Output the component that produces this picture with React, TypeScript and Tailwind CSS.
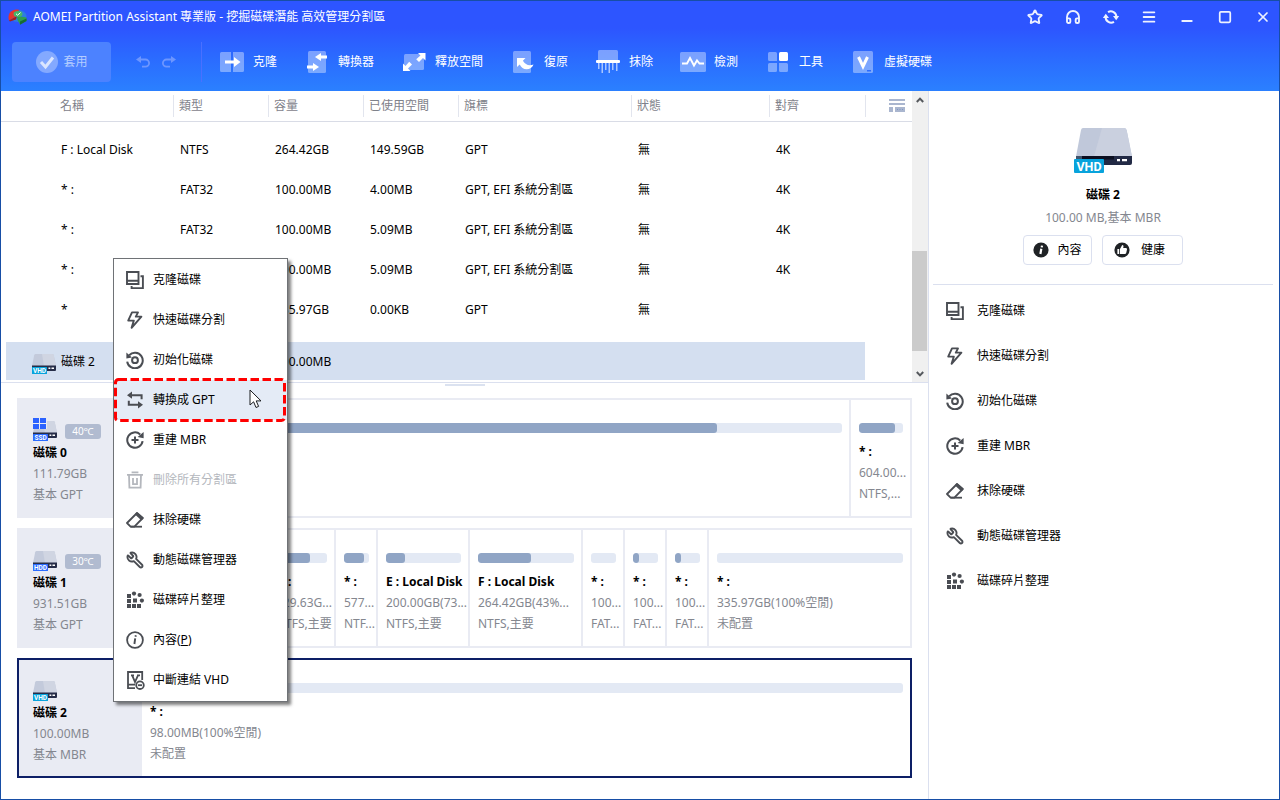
import type { ReactNode } from "react";
import { Menu, Minus, Square, Star, X, Wrench, Headphones } from "lucide-react";

/* ---------- action icons ---------- */

const CloneIcon = () => (
  <svg viewBox="0 0 18 18" className="size-[18px] shrink-0" fill="none" stroke="currentColor" strokeWidth="1.9">
    <path d="M1 1h11.500v12H1zM1 9.800h11.500M14.500 5.200h2.400v11.900H5.600v-2.200" />
  </svg>
);
const BoltIcon = () => (
  <svg viewBox="0 0 18 18" className="size-[18px] shrink-0" fill="none" stroke="currentColor" strokeWidth="1.9" strokeLinejoin="round">
    <path d="M6 1.400h6L9.800 5.600h5.600L5.600 16.800l2.200-7.200H2.200z" />
  </svg>
);
const InitIcon = () => (
  <svg viewBox="0 0 18 18" className="size-[18px] shrink-0" fill="none" stroke="currentColor" strokeWidth="2">
    <path d="M3.200 4.200A7.800 7.800 0 1 1 1.200 10.600" />
    <circle cx="9" cy="9.200" r="2.900" />
    <path d="M.4 1.400v6l5.600-.8z" fill="currentColor" stroke="none" />
  </svg>
);
const ConvertIcon = () => (
  <svg viewBox="0 0 18 18" className="size-[18px] shrink-0" fill="none" stroke="currentColor" strokeWidth="2">
    <path d="M4 4.200h11.600v4M14 13.800H2.800v-4" />
    <path d="M1 4.200l5-3.600v7.200zM17 13.800l-5-3.600v7.200z" fill="currentColor" stroke="none" />
  </svg>
);
const RebuildIcon = () => (
  <svg viewBox="0 0 18 18" className="size-[18px] shrink-0" fill="none" stroke="currentColor" strokeWidth="2">
    <path d="M14.200 3.400A7.700 7.700 0 1 0 16.600 10.200M9 5.600v7M5.500 9.100h7" />
    <path d="M17.600 1v6.200l-6-1.200z" fill="currentColor" stroke="none" />
  </svg>
);
const TrashIcon = () => (
  <svg viewBox="0 0 18 18" className="size-[18px] shrink-0" fill="none" stroke="currentColor" strokeWidth="1.800">
    <path d="M1 3.800h16M5.600 1.400h6.800M3 3.800l.4 12.800h11.200L15 3.800M7 7v6.200h4V7" />
  </svg>
);
const EraserIcon = () => (
  <svg viewBox="0 0 18 18" className="size-[18px] shrink-0" fill="none" stroke="currentColor" strokeWidth="1.800" strokeLinejoin="round">
    <path d="M11 2l5.800 5-8.400 8.600H4.600L1 12z" />
    <path d="M11 2l5.800 5-1.400 1.400L9.800 3.200z" fill="currentColor" strokeWidth="1.400" />
    <path d="M4.600 15.700H16" />
  </svg>
);
const WrenchIcon = () => <Wrench className="size-[18px] shrink-0 -scale-x-100" strokeWidth={2.500} />;
const DefragIcon = () => (
  <svg viewBox="0 0 18 18" className="size-[18px] shrink-0" fill="currentColor">
    <path d="M1 3h4v4H1zM1 8h4v4H1zM7 7.500h4v4H7zM1 13h4v4H1zM6 13h4v4H6zM11 13h4v4h-4z" />
    <circle cx="8" cy="2.600" r="2.100" />
    <circle cx="13.600" cy="4" r="2.100" />
    <circle cx="15.900" cy="9.600" r="2.100" />
  </svg>
);
const InfoIcon = () => (
  <svg viewBox="0 0 18 18" className="size-[18px] shrink-0" fill="none" stroke="currentColor" strokeWidth="1.800">
    <circle cx="9" cy="9" r="7.900" />
    <path d="M9.200 7.400L8.400 13M9.800 4.200l-.3 1.600" strokeWidth="1.900" />
  </svg>
);
const DetachIcon = () => (
  <svg viewBox="0 0 19 19" className="size-[19px] shrink-0" fill="none" stroke="currentColor" strokeWidth="1.800">
    <path d="M16.200 9V1H2v16.200h7M2 13.600h7M5 4.400h3M6.200 4.400L9 11l3-6.600M11 4.400h3" />
    <circle cx="14" cy="14.200" r="3.800" />
    <path d="M12 14.200h4" />
  </svg>
);

type Action = { label: string; icon: ReactNode };
const actions: Action[] = [
  { label: "克隆磁碟", icon: <CloneIcon /> },
  { label: "快速磁碟分割", icon: <BoltIcon /> },
  { label: "初始化磁碟", icon: <InitIcon /> },
  { label: "重建 MBR", icon: <RebuildIcon /> },
  { label: "抹除硬碟", icon: <EraserIcon /> },
  { label: "動態磁碟管理器", icon: <WrenchIcon /> },
  { label: "磁碟碎片整理", icon: <DefragIcon /> },
];

type MenuEntry = { label: ReactNode; icon: ReactNode; state?: "active" | "disabled" };
const menuEntries: MenuEntry[] = [
  actions[0],
  actions[1],
  actions[2],
  { label: "轉換成 GPT", icon: <ConvertIcon />, state: "active" },
  actions[3],
  { label: "刪除所有分割區", icon: <TrashIcon />, state: "disabled" },
  actions[4],
  actions[5],
  actions[6],
  { label: <>內容(<u>P</u>)</>, icon: <InfoIcon /> },
  { label: "中斷連結 VHD", icon: <DetachIcon /> },
];

/* ---------- toolbar ---------- */

const tools: Action[] = [
  {
    label: "克隆",
    icon: (
      <svg viewBox="0 0 26 24" className="h-6 w-[26px]" fill="#fff">
        <path d="M1 3.500q0-1.500 1.500-1.500H12v20H2.500q-1.500 0-1.500-1.500zM14 2h9.500q1.500 0 1.500 1.500v17q0 1.500-1.500 1.500H14z" opacity=".38" />
        <path d="M6 10.400h9V7l6.500 5-6.500 5v-3.400H6z" />
      </svg>
    ),
  },
  {
    label: "轉換器",
    icon: (
      <svg viewBox="0 0 26 24" className="h-6 w-[26px]" fill="#fff">
        <rect x="4" y="1" width="18" height="22" rx="1.500" opacity=".38" />
        <path d="M23 5.500h-6V3l-6 4 6 4V8.500h6zM3 15.500h6V13l6 4-6 4v-2.500H3z" />
      </svg>
    ),
  },
  {
    label: "釋放空間",
    icon: (
      <svg viewBox="0 0 26 24" className="h-6 w-[26px]" fill="#fff">
        <rect x="3" y="4" width="20" height="16" rx="1.500" opacity=".38" />
        <path d="M17 3h7.500v7.500L22 8l-4 4-2.800-2.800L19.500 5.500zM2 13.500V21h7.500L7 18.500l4-4-2.800-2.800L4.500 16z" />
      </svg>
    ),
  },
  {
    label: "復原",
    icon: (
      <svg viewBox="0 0 26 24" className="h-6 w-[26px]" fill="#fff">
        <rect x="3" y="1" width="18" height="22" rx="1.500" opacity=".38" />
        <path d="M7 8h8.500l-2.600 2.800c2.600 4 6 5.400 10.600 3.700-1 3-3.800 4.800-6.800 4.800-3.400 0-5.400-1.800-7-4.800L7 17z" />
      </svg>
    ),
  },
  {
    label: "抹除",
    icon: (
      <svg viewBox="0 0 26 24" className="h-6 w-[26px]" fill="#fff">
        <path d="M3 1.500Q3 0 4.500 0h17Q23 0 23 1.500V10H3z" opacity=".38" />
        <rect x="1" y="10" width="24" height="3" rx="1" />
        <path d="M3 13h1.500v6H3zM6.500 13H8v10H6.500zM10 13h1.500v7H10zM13.500 13H15v10h-1.500zM17 13h1.500v7H17zM21 13h1.500v8H21z" opacity=".6" />
      </svg>
    ),
  },
  {
    label: "檢測",
    icon: (
      <svg viewBox="0 0 26 24" className="h-6 w-[26px]" fill="none">
        <rect y="2" width="26" height="20" rx="1.500" fill="#fff" opacity=".38" />
        <path d="M2 13.500h5L10 8l4 7.500 3-5 2.500 3H24" stroke="#fff" strokeWidth="1.900" />
      </svg>
    ),
  },
  {
    label: "工具",
    icon: (
      <svg viewBox="0 0 26 24" className="h-6 w-[26px]" fill="#fff">
        <path d="M4.500 2h6q1.500 0 1.500 1.500V11H4.500Q3 11 3 9.500v-6Q3 2 4.500 2zM4.500 13H12v7.500q0 1.500-1.500 1.500h-6Q3 22 3 20.500v-6Q3 13 4.500 13zM14 13h7.500q1.500 0 1.500 1.500v6q0 1.500-1.500 1.500h-6q-1.500 0-1.500-1.500z" opacity=".38" />
        <rect x="14" y="2" width="9" height="9" rx="1.500" />
      </svg>
    ),
  },
  {
    label: "虛擬硬碟",
    icon: (
      <svg viewBox="0 0 26 24" className="h-6 w-[26px]">
        <rect x="3" y="1" width="20" height="22" rx="1.500" fill="#fff" opacity=".38" />
        <path d="M8.500 7l4.500 9.500L17.500 7" fill="none" stroke="#fff" strokeWidth="3" />
        <rect x="17" y="20" width="4" height="1.500" fill="#2b6cff" />
      </svg>
    ),
  },
];

const Logo = () => (
  <svg viewBox="0 0 19 16" className="h-4 w-[19px]">
    <ellipse cx="10" cy="7" rx="8.500" ry="6" fill="#2d7de0" />
    <path d="M9 7L1 11.500Q-1 4 5 1.200 8 0 11 .8z" fill="#e5352f" />
    <path d="M1 11.500L9 7l-1 3.500-6 2z" fill="#a81e1e" />
    <path d="M9 7l9.500 1.500V12L12 15.500 9.500 11z" fill="#2f9e4f" />
    <path d="M12 12.500l6.500-3V12L12 15.800z" fill="#176b34" />
    <ellipse cx="10" cy="5" rx="4.500" ry="3" fill="#45b56a" />
    <path d="M8 4.800l1.600 1.400L12.500 3.600" fill="none" stroke="#fff" strokeWidth="1" />
  </svg>
);

const RefreshIcon = () => (
  <svg viewBox="0 0 16 16" className="size-4" fill="none" stroke="currentColor" strokeWidth="2">
    <path d="M5 3.200A5.500 5.500 0 0 1 13.400 8M11 12.800A5.500 5.500 0 0 1 2.600 8" />
    <path d="M10 7H16.200L13.200 11.200zM-.2 9h6.200L2.800 4.800z" fill="currentColor" stroke="none" />
  </svg>
);

const windowButtons: Action[] = [
  { label: "收藏", icon: <Star className="size-4" strokeWidth={2.800} /> },
  { label: "支援", icon: <Headphones className="size-4" strokeWidth={2.800} /> },
  { label: "重新整理", icon: <RefreshIcon /> },
  { label: "選單", icon: <Menu className="size-4" strokeWidth={2.800} /> },
  { label: "最小化", icon: <Minus className="size-4 translate-y-1" strokeWidth={3} /> },
  { label: "最大化", icon: <Square className="size-[14px]" strokeWidth={3} /> },
  { label: "關閉", icon: <X className="size-4" strokeWidth={2.600} /> },
];

function Header() {
  return (
    <header className="bg-linear-to-b from-[#2d55ff] from-30% to-[#2b80ff] text-white">
      <div className="flex h-[31px] items-center justify-between pr-2 pl-[7px]">
        <div className="flex items-center gap-[6px]">
          <Logo />
          <h1 className="whitespace-nowrap">AOMEI Partition Assistant 專業版 - 挖掘磁碟潛能 高效管理分割區</h1>
        </div>
        <div className="flex items-center gap-[22px]">
          {windowButtons.map((b) => (
            <button key={b.label} aria-label={b.label} className="flex size-4 items-center justify-center text-[#eef2ff]">
              {b.icon}
            </button>
          ))}
        </div>
      </div>
      <div className="flex h-[59px] items-center pt-px pl-[11px]">
        <button className="flex h-10 w-[99px] items-center justify-center gap-1 rounded-[4px] bg-[#4c82ff] text-[#b5cdff]">
          <svg viewBox="0 0 24 24" className="size-6">
            <circle cx="12" cy="12" r="11" fill="#84a9ff" />
            <path d="M6 12l4.500 5L18 7.500" fill="none" stroke="#dbe6ff" strokeWidth="3" />
          </svg>
          套用
        </button>
        <div className="ml-[25px] flex w-[65px] gap-3 text-[#6d96ff]">
          <button aria-label="復原上一步">
            <svg viewBox="0 0 14 12" className="h-3 w-[14px]" fill="none" stroke="currentColor" strokeWidth="1.800">
              <path d="M3 3.500h6.500a3.600 3.600 0 0 1 0 7.200H6" />
              <path d="M0 3.500L5 0v7z" fill="currentColor" stroke="none" />
            </svg>
          </button>
          <button aria-label="重做">
            <svg viewBox="0 0 14 12" className="h-3 w-[14px] -scale-x-100" fill="none" stroke="currentColor" strokeWidth="1.800">
              <path d="M3 3.500h6.500a3.600 3.600 0 0 1 0 7.200H6" />
              <path d="M0 3.500L5 0v7z" fill="currentColor" stroke="none" />
            </svg>
          </button>
        </div>
        <div className="flex h-10 items-center gap-[27px] border-l border-[#4a70ff] pl-[17px]">
          {tools.map((t) => (
            <button key={t.label} className="flex items-center gap-2 whitespace-nowrap">
              {t.icon}
              {t.label}
            </button>
          ))}
        </div>
      </div>
    </header>
  );
}

/* ---------- drives ---------- */

type DriveKind = "VHD" | "HDD" | "SSD";

function DriveIcon({ kind, windows }: { kind: DriveKind; windows?: boolean }) {
  return (
    <svg viewBox="0 0 24 24" className="size-6 shrink-0">
      <path d="M3.500 4h16.800q1.200 0 1.500 1.200L24 16H0L2.200 5.200Q2.500 4 3.500 4z" fill="#c3cadb" />
      <path d="M10 4h10.300q1.200 0 1.500 1.200L24 16H12z" fill="#d0d5e2" />
      <path d="M0 15.500h24v4.500q0 1-1 1H0z" fill="#262d48" />
      <path d="M16.500 17.600h1.800v1.400h-1.800zM19.500 17.600h2.500v1.400h-2.500z" fill="#fff" />
      {windows && (
        <>
          <path d="M0 0h14v12H0z" fill="#e9ebf3" />
          <path d="M0 1h6v5H0zM7 1h6v5H7zM0 7h6v5H0zM7 7h6v5H7z" fill="#2b62ff" />
        </>
      )}
      <rect y="17" width="15" height="7" rx=".5" fill={kind === "VHD" ? "#08a3dc" : "#2b6cff"} />
      <text x="7.500" y="23" textAnchor="middle" fontSize="6.500" fontWeight="700" fill="#fff" fontFamily="Roboto, sans-serif">
        {kind}
      </text>
    </svg>
  );
}

const LargeDriveIcon = () => (
  <svg viewBox="0 0 58 46" className="h-[46px] w-[58px]">
    <path d="M9 0h41q2 0 2.600 2L58 28.500H2L7 2q.5-2 2-2z" fill="#c0c8da" />
    <path d="M28 0h22q2 0 2.600 2L58 28.500H20z" fill="#cad0df" />
    <path d="M2 28h56v7q0 2-2 2H2z" fill="#222a45" />
    <path d="M2 28h6v3H2z" fill="#40536b" />
    <path d="M8 28h32v3.500H8z" fill="#0b0e20" />
    <path d="M43 31h3v2.200h-3zM48 31h5v2.200h-5z" fill="#fff" />
    <rect y="31" width="30" height="14" rx="1" fill="#08a3dc" />
    <text x="15" y="42.500" textAnchor="middle" fontSize="12.500" fontWeight="700" fill="#fff" fontFamily="Roboto, sans-serif">
      VHD
    </text>
  </svg>
);

/* ---------- partition table ---------- */

const columns = ["名稱", "類型", "容量", "已使用空間", "旗標", "狀態", "對齊"];
const rows = [
  ["F : Local Disk", "NTFS", "264.42GB", "149.59GB", "GPT", "無", "4K"],
  ["* :", "FAT32", "100.00MB", "4.00MB", "GPT, EFI 系統分割區", "無", "4K"],
  ["* :", "FAT32", "100.00MB", "5.09MB", "GPT, EFI 系統分割區", "無", "4K"],
  ["* :", "FAT32", "100.00MB", "5.09MB", "GPT, EFI 系統分割區", "無", "4K"],
  ["*", "", "335.97GB", "0.00KB", "GPT", "無", ""],
];

function PartitionTable() {
  return (
    <section className="flex h-[291px] overflow-hidden">
      <div className="min-w-0 flex-1">
        <table className="w-full table-fixed text-left">
          <colgroup>
            <col className="w-[172px]" />
            <col className="w-[95px]" />
            <col className="w-[95px]" />
            <col className="w-[95px]" />
            <col className="w-[173px]" />
            <col className="w-[138px]" />
            <col className="w-[96px]" />
            <col />
          </colgroup>
          <thead>
            <tr className="h-[30px] border-b border-[#d9dce6] text-[#7f828b]">
              {columns.map((c, i) => (
                <th key={c} className="p-0 font-normal">
                  <div className={i === 0 ? "pl-[59px]" : "flex h-[22px] items-center border-l border-[#e2e5ee] pl-[5px]"}>{c}</div>
                </th>
              ))}
              <th className="p-0">
                <div className="flex h-[22px] items-center justify-end border-l border-[#e2e5ee] pr-[7px]">
                  <button aria-label="欄位設定">
                    <svg viewBox="0 0 16 13" className="h-[13px] w-4" fill="#aab6cf">
                      <path d="M0 0h16v2H0zM0 4h16v2H0zM0 8h4v5H0zM6 8h10v5H6z" />
                      <path d="M8 10h1v1H8zM10.500 10h1v1h-1zM13 10h1v1h-1z" fill="#7f97c4" />
                    </svg>
                  </button>
                </div>
              </th>
            </tr>
          </thead>
          <tbody>
            <tr className="h-[9px]">
              <td colSpan={8} />
            </tr>
            {rows.map((r, i) => (
              <tr key={i} className="h-10">
                {r.map((v, j) => (
                  <td key={j} className={j === 0 ? "p-0 pl-[60px]" : "p-0 pl-[7px] whitespace-nowrap"}>
                    {v}
                  </td>
                ))}
                <td />
              </tr>
            ))}
            <tr className="h-3">
              <td colSpan={8} />
            </tr>
            <tr>
              <td className="p-0 pl-[5px]">
                <div className="flex h-[38px] items-center gap-[5px] bg-[#d4dff0] pt-px pl-[26px]">
                  <DriveIcon kind="VHD" />
                  磁碟 2
                </div>
              </td>
              <td className="bg-[#d4dff0]" />
              <td className="bg-[#d4dff0] p-0 pt-px pl-[7px]">100.00MB</td>
              <td colSpan={4} className="bg-[#d4dff0]" />
              <td />
            </tr>
          </tbody>
        </table>
      </div>
      <div className="flex w-4 shrink-0 flex-col items-center justify-between bg-[#f0f0f0] text-[#55585d]">
        <button aria-label="向上捲動" className="flex h-[17px] w-4 items-center justify-center">
          <svg viewBox="0 0 8 6" className="h-[6px] w-2" fill="none" stroke="currentColor" strokeWidth="2">
            <path d="M.8 5L4 1.600 7.200 5" />
          </svg>
        </button>
        <div className="flex w-4 flex-1 flex-col justify-end pb-[14px]">
          <div className="h-[100px] w-[15px] bg-[#cbcbcb]" />
        </div>
        <button aria-label="向下捲動" className="flex h-[17px] w-4 items-center justify-center">
          <svg viewBox="0 0 8 6" className="h-[6px] w-2" fill="none" stroke="currentColor" strokeWidth="2">
            <path d="M.8 1L4 4.400 7.200 1" />
          </svg>
        </button>
      </div>
    </section>
  );
}

/* ---------- disk map ---------- */

type Partition = { span: number; used?: number; lines?: string[] };
type Disk = {
  name: string;
  size: string;
  type: string;
  kind: DriveKind;
  windows?: boolean;
  temp?: string;
  selected?: boolean;
  partitions: Partition[];
};

const disks: Disk[] = [
  {
    name: "磁碟 0",
    size: "111.79GB",
    type: "基本 GPT",
    kind: "SSD",
    windows: true,
    temp: "40℃",
    partitions: [
      { span: 707, used: 82 },
      { span: 61, used: 82, lines: ["* :", "604.00...", "NTFS,..."] },
    ],
  },
  {
    name: "磁碟 1",
    size: "931.51GB",
    type: "基本 GPT",
    kind: "HDD",
    temp: "30℃",
    partitions: [
      { span: 124, used: 50 },
      { span: 68, used: 67, lines: ["D :", "129.63G...", "NTFS,主要"] },
      { span: 42, used: 80, lines: ["* :", "577...", "NTF..."] },
      { span: 92, used: 25, lines: ["E : Local Disk", "200.00GB(73...", "NTFS,主要"] },
      { span: 113, used: 55, lines: ["F : Local Disk", "264.42GB(43%...", "NTFS,主要"] },
      { span: 42, lines: ["* :", "100...", "FAT..."] },
      { span: 42, used: 24, lines: ["* :", "100...", "FAT..."] },
      { span: 42, used: 24, lines: ["* :", "100...", "FAT..."] },
      { span: 203, lines: ["* :", "335.97GB(100%空閒)", "未配置"] },
    ],
  },
  {
    name: "磁碟 2",
    size: "100.00MB",
    type: "基本 MBR",
    kind: "VHD",
    selected: true,
    partitions: [{ span: 1, lines: ["* :", "98.00MB(100%空閒)", "未配置"] }],
  },
];

function DiskCard({ disk }: { disk: Disk }) {
  return (
    <article className={`flex h-[120px] border-2 ${disk.selected ? "border-[#0d1f66]" : "border-[#e9ebf3]"}`}>
      <div className="w-[123px] shrink-0 bg-[#e9ebf3] pt-[17px] pl-[14px] leading-[21px] text-[#84878f]">
        <div className="mb-px flex h-6 items-end gap-2">
          <DriveIcon kind={disk.kind} windows={disk.windows} />
          {disk.temp && (
            <span className="mb-[2px] flex h-[15px] w-9 items-center justify-center rounded-[3px] bg-[#b1bbd0] text-[10px] text-white">
              {disk.temp}
            </span>
          )}
        </div>
        <h3 className="font-bold text-black">{disk.name}</h3>
        <p>{disk.size}</p>
        <p>{disk.type}</p>
      </div>
      <div
        className="grid min-w-0 flex-1"
        style={{ gridTemplateColumns: disk.partitions.map((p) => `minmax(0, ${p.span}fr)`).join(" ") }}
      >
        {disk.partitions.map((p, i) => (
          <div key={i} className={`overflow-hidden pt-[23px] pl-2 ${i > 0 ? "border-l-2 border-[#e9ebf3]" : ""}`}>
            <div className="mr-[7px] h-[10px] overflow-hidden rounded-[3px] bg-[#e3e9f4]">
              <div className="h-full rounded-[3px] bg-[#90a5c5]" style={{ width: `${p.used ?? 0}%` }} />
            </div>
            <div className="mt-2 leading-[21px] whitespace-nowrap text-[#84878f]">
              {p.lines?.map((line, j) => (
                <p key={j} className={j === 0 ? "font-bold text-black" : ""}>
                  {line}
                </p>
              ))}
            </div>
          </div>
        ))}
      </div>
    </article>
  );
}

/* ---------- side panel ---------- */

function SidePanel() {
  return (
    <aside className="w-[351px] shrink-0 border-l border-[#dbe0ef] pr-[6px] pl-1">
      <div className="flex flex-col items-center border-b border-[#dbe0ef] pt-[37px] pb-[19px]">
        <LargeDriveIcon />
        <h2 className="mt-[10px] leading-[21px] font-bold">磁碟 2</h2>
        <p className="mt-[2px] leading-[21px] text-[#84878f]">100.00 MB,基本 MBR</p>
        <div className="mt-[7px] flex gap-[10px]">
          <button className="flex h-[30px] w-[69px] items-center justify-center gap-2 rounded-[4px] border border-[#dbe0ef]">
            <svg viewBox="0 0 16 16" className="size-4">
              <circle cx="8" cy="8" r="7.600" fill="#1f2225" />
              <path d="M8.300 6.800L7.400 12M9 3.600l-.3 1.800" stroke="#fff" strokeWidth="2.200" />
            </svg>
            內容
          </button>
          <button className="flex h-[30px] w-[81px] items-center gap-[11px] rounded-[4px] border border-[#dbe0ef] pl-[11px]">
            <svg viewBox="0 0 16 16" className="size-4">
              <circle cx="8" cy="8" r="7.600" fill="#1f2225" />
              <path d="M3.400 7h1.800v5H3.400zM6 7l2.200-4q1.600 0 1.300 1.600L9.200 6H12q1.200.2 1 1.400l-.8 3.600q-.3 1-1.300 1H6z" fill="#fff" />
            </svg>
            健康
          </button>
        </div>
      </div>
      <nav className="flex flex-col pt-[3px] text-[#4a4d53]">
        {actions.map((a) => (
          <button key={a.label} className="flex h-[45px] items-center gap-[13px] pl-[13px]">
            {a.icon}
            <span className="text-black">{a.label}</span>
          </button>
        ))}
      </nav>
    </aside>
  );
}

/* ---------- context menu ---------- */

function ContextMenu() {
  return (
    <div
      role="menu"
      className="absolute top-[257px] left-[112px] w-[175px] border border-[#6f7276] bg-white py-px shadow-[3px_3px_3px_rgba(0,0,0,0.5)]"
    >
      {menuEntries.map((m, i) => (
        <button
          key={i}
          role="menuitem"
          disabled={m.state === "disabled"}
          className={`relative flex h-10 w-full items-center pl-3 ${m.state === "active" ? "bg-[#e4ebf6]" : ""} ${
            m.state === "disabled" ? "text-[#b4b7bd]" : "text-[#4a4d53]"
          }`}
        >
          <span className="w-[27px]">{m.icon}</span>
          <span className={m.state === "disabled" ? "" : "text-black"}>{m.label}</span>
          {m.state === "active" && (
            <>
              <svg viewBox="0 0 173 44" className="absolute -top-[2px] left-0 h-11 w-[173px]" fill="none">
                <rect x="1.500" y="1.500" width="169" height="41" rx="3" stroke="#ff0000" strokeWidth="3" strokeDasharray="8.500 3.500" />
              </svg>
              <svg viewBox="0 0 13 20" className="absolute top-[9px] left-[135px] h-5 w-[13px]">
                <path d="M1 1v15l3.600-3.200L7 18.500l2.600-1.100-2.400-5.500H12z" fill="#fff" stroke="#1a1c20" strokeWidth="1" />
              </svg>
            </>
          )}
        </button>
      ))}
    </div>
  );
}

export default function App() {
  return (
    <div className="relative flex min-h-screen flex-col border border-[#174ea6] bg-white font-['Noto_Sans','Noto_Sans_CJK_TC',sans-serif] text-[12px] leading-4 text-black">
      <Header />
      <div className="flex flex-1">
        <main className="flex min-w-0 flex-1 flex-col">
          <PartitionTable />
          <section className="border-t border-[#dbe0ef] px-4 pb-4">
            <div className="mx-auto mt-px h-[2px] w-10 bg-[#dbe2f0]" />
            <div className="mt-3 flex flex-col gap-[10px]">
              {disks.map((d) => (
                <DiskCard key={d.name} disk={d} />
              ))}
            </div>
          </section>
        </main>
        <SidePanel />
      </div>
      <ContextMenu />
    </div>
  );
}
